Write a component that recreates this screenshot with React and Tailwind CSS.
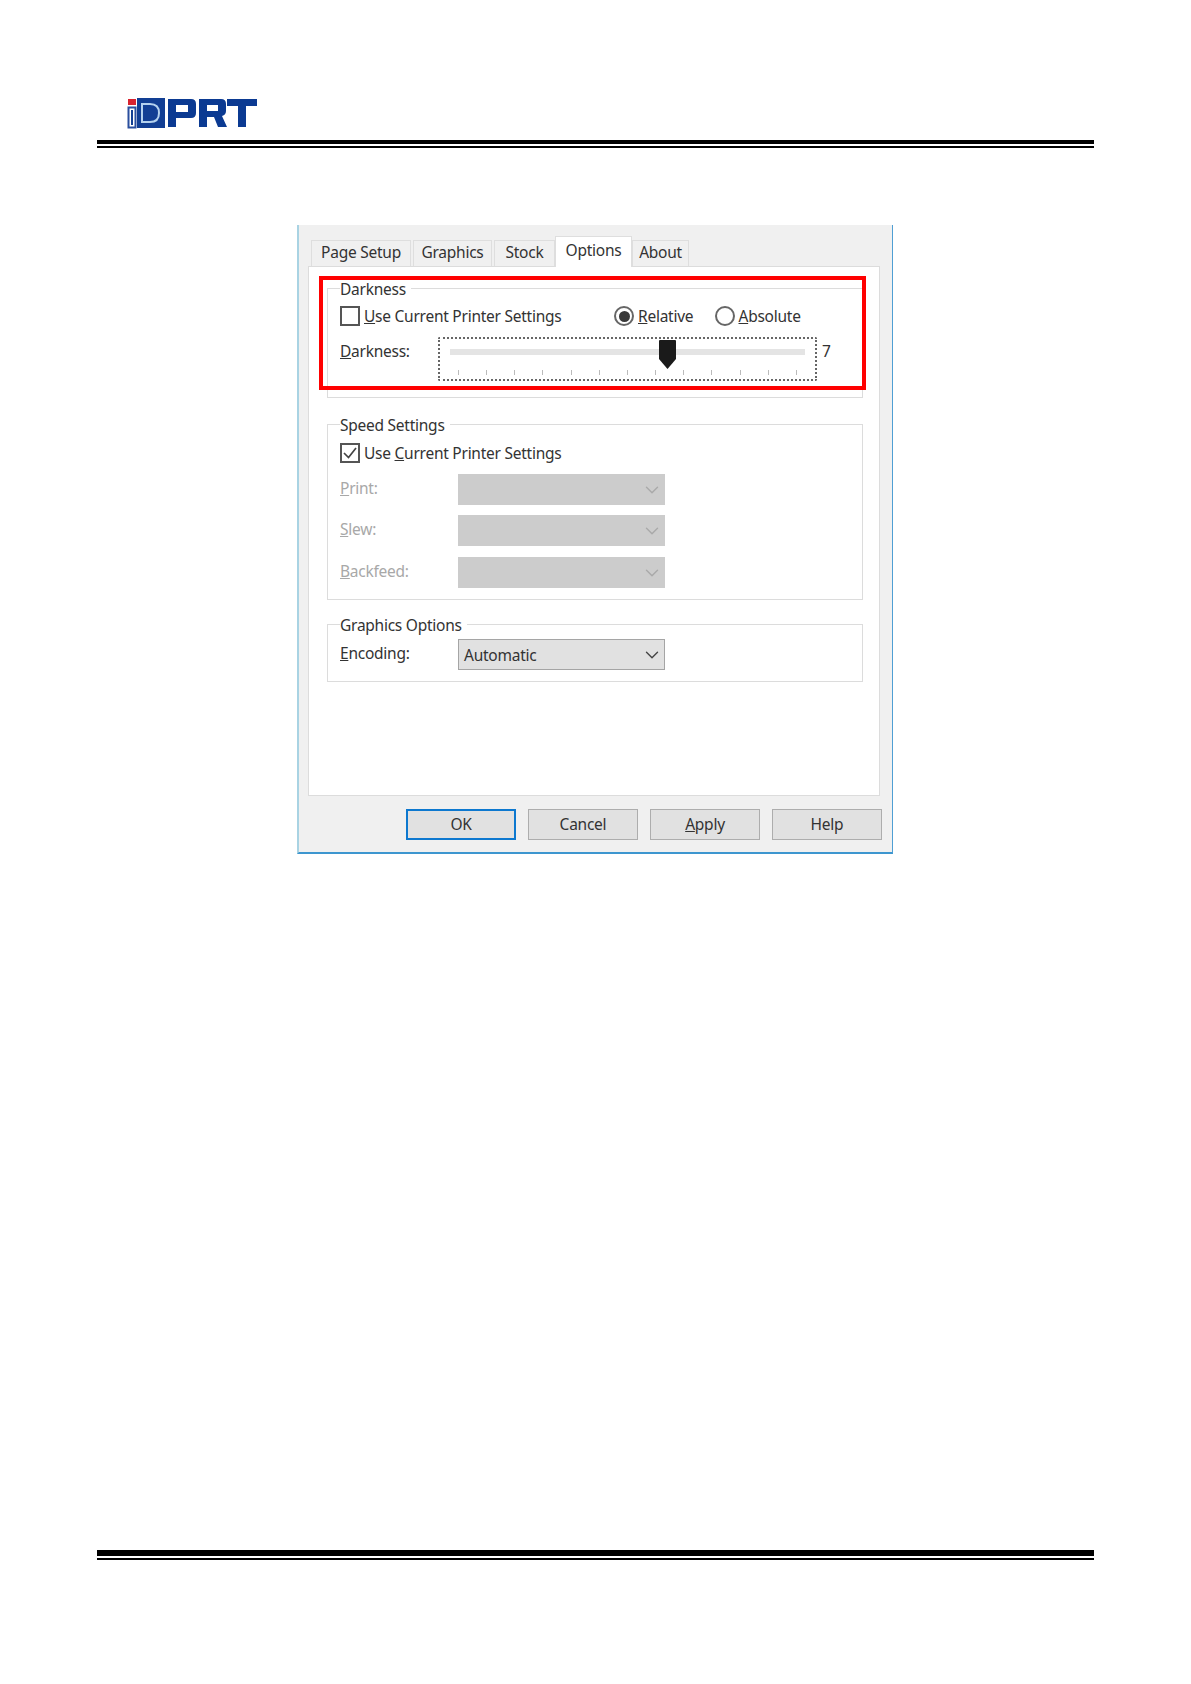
import { ChevronDown } from 'lucide-react'

/* ─── Logo ────────────────────────────────────────────────────────────────── */
function Logo() {
  return (
    <svg width="130" height="31" viewBox="0 0 130 31" className="ml-[30px] block">
      <rect x="1" y="1" width="8" height="6" fill="#d8232f" />
      <rect x="1.5" y="9.5" width="7" height="20" fill="#fff" stroke="#2a4f9e" strokeWidth="2" />
      <rect x="4" y="12" width="2" height="15" fill="#123f94" />
      <rect x="10" y="0" width="28" height="30" fill="#123f94" />
      <path d="M14 5 H23 Q33 5 33 15 Q33 25 23 25 H14 Z M16 7 V23 H23 Q31 23 31 15 Q31 7 23 7 Z" fill="#b5d2ee" fillRule="evenodd" />
      <path fillRule="evenodd" fill="#0b3a92" d="M41 29 V1 H64 Q69 1 69 6 V15 Q69 20 64 20 H49 V29 Z M49 7 V14 H61 V7 Z" />
      <path fillRule="evenodd" fill="#0b3a92" d="M72 29 V1 H94 Q99 1 99 6 V13 Q99 17 95 18 L100 29 H91 L87 19 H80 V29 Z M80 7 V13 H91 V7 Z" />
      <path fill="#0b3a92" d="M100 1 H130 V8 H119 V29 H111 V8 H100 Z" />
    </svg>
  )
}

/* ─── Small dialog pieces ─────────────────────────────────────────────────── */
function Tab({ label, width }) {
  return (
    <div
      className={`h-[26px] flex items-center justify-center pb-[2px] bg-[#f0f0f0] border border-b-0 border-[#dedede] text-[#333] ${width}`}
    >
      {label}
    </div>
  )
}

function Group({ title, className, children }) {
  return (
    <div className={`relative border border-[#dcdcdc] px-3 ${className}`}>
      <span className="absolute left-3 top-[-11px] h-[22px] bg-white pr-[5px] leading-[22px] text-[#333]">{title}</span>
      {children}
    </div>
  )
}

function Checkbox({ checked }) {
  return (
    <div className="w-5 h-5 shrink-0 border-2 border-[#555] bg-white flex items-center justify-center">
      {checked && (
        <svg width="16" height="16" viewBox="0 0 16 16" fill="none">
          <path d="M2 8 L6.5 12.5 L14 3" stroke="#444" strokeWidth="1.7" />
        </svg>
      )}
    </div>
  )
}

function Radio({ checked }) {
  return (
    <div className="w-5 h-5 shrink-0 rounded-full border-2 border-[#666] bg-white flex items-center justify-center">
      {checked && <div className="w-[11px] h-[11px] rounded-full bg-[#3a3a3a]" />}
    </div>
  )
}

function SelectRow({ label, value, disabled }) {
  return (
    <div className="flex items-center">
      <div className={`w-[118px] -mt-[1px] ${disabled ? 'text-[#a8a8a8]' : 'text-[#333]'}`}>{label}</div>
      <div
        className={`w-[207px] h-[31px] flex items-center justify-between pl-[5px] ${
          disabled ? 'bg-[#cccccc] pr-[2px]' : 'bg-[#e1e1e1] border border-[#a5a5a5] pr-[1px]'
        }`}
      >
        <span className="text-[#333] pt-[2px]">{value}</span>
        <ChevronDown size={22} strokeWidth={1.5} color={disabled ? '#a9a9a9' : '#444'} />
      </div>
    </div>
  )
}

function DialogButton({ children, focused }) {
  return (
    <div
      className={`w-[110px] h-[31px] flex items-center justify-center pt-[1px] bg-[#e1e1e1] text-[#333] ${
        focused ? 'border-2 border-[#0d78cf]' : 'border-[1.5px] border-[#adadad]'
      }`}
    >
      {children}
    </div>
  )
}

const ticks = Array.from({ length: 13 })

/* ─── App ─────────────────────────────────────────────────────────────────── */
export default function App() {
  return (
    <div
      className="min-h-[1684px] bg-white pt-[98px] px-[97px] text-[15.5px] tracking-[-0.25px]"
      style={{ fontFamily: '"Noto Sans", sans-serif' }}
    >
      <Logo />
      <div className="mt-[11px] h-[4px] bg-black" />
      <div className="mt-[2px] h-[2px] bg-black" />

      {/* printer driver dialog */}
      <div className="mt-[77px] ml-[200px] w-[596px] h-[629px] bg-[#f0f0f0] border-l-2 border-r border-b-2 border-l-[#a9d3e3] border-r-[#4f9fd4] border-b-[#3d96cf] pt-[11px] pl-[9px]">
        <div className="flex items-end pl-[3px] h-[30px] gap-[2px]">
          <Tab label="Page Setup" width="w-[100px]" />
          <Tab label="Graphics" width="w-[79px]" />
          <Tab label="Stock" width="w-[61px] -mr-[2px]" />
          <div className="relative z-10 w-[77px] h-[31px] -mb-px flex items-center justify-center bg-white border border-b-0 border-[#dedede] text-[#333] pb-[3px]">
            Options
          </div>
          <div className="-ml-[2px]">
            <Tab label="About" width="w-[57px]" />
          </div>
        </div>

        <div className="relative w-[572px] h-[530px] bg-white border border-[#dcdcdc] pt-[21px] pl-[18px]">
          <Group title="Darkness" className="w-[536px] h-[110px] pt-[17px]">
            <div className="flex items-center h-5">
              <div className="w-[274px] flex items-center gap-[4px]">
                <Checkbox />
                <span className="text-[#333] pt-[1px]"><u>U</u>se Current Printer Settings</span>
              </div>
              <div className="w-[100.5px] flex items-center gap-[4px]">
                <Radio checked />
                <span className="text-[#333] pt-[1px]"><u>R</u>elative</span>
              </div>
              <div className="flex items-center gap-[4px]">
                <Radio />
                <span className="text-[#333] pt-[1px]"><u>A</u>bsolute</span>
              </div>
            </div>
            <div className="flex items-start mt-[11px]">
              <div className="w-[98px] text-[#333] pt-[3px]"><u>D</u>arkness:</div>
              <div className="relative w-[379px] h-[44px] border-2 border-dotted border-[#666] rounded-[2px] pt-[10px]">
                <div className="ml-[10px] w-[355px] h-[6px] bg-[#e4e4e4]" />
                <svg width="17" height="29" viewBox="0 0 17 29" className="absolute left-[219px] top-[1px]">
                  <path d="M0 1 Q0 0 1 0 H16 Q17 0 17 1 V19 L8.5 29 L0 19 Z" fill="#1a1a1a" />
                </svg>
                <div className="ml-[18px] mt-[15px] w-[339px] flex justify-between">
                  {ticks.map((_, i) => (
                    <div key={i} className="w-px h-[5px] bg-[#bbbbbb]" />
                  ))}
                </div>
              </div>
              <span className="ml-[5px] text-[#333] pt-[3px]">7</span>
            </div>
          </Group>

          <Group title="Speed Settings" className="mt-[26px] w-[536px] h-[176px] pt-[18px]">
            <div className="flex items-center gap-[4px] h-5">
              <Checkbox checked />
              <span className="text-[#333] pt-[1px]">Use <u>C</u>urrent Printer Settings</span>
            </div>
            <div className="mt-[11px] flex flex-col gap-[10px]">
              <SelectRow label={<><u>P</u>rint:</>} disabled />
              <SelectRow label={<><u>S</u>lew:</>} disabled />
              <div className="mt-[1px]">
                <SelectRow label={<><u>B</u>ackfeed:</>} disabled />
              </div>
            </div>
          </Group>

          <Group title="Graphics Options" className="mt-[24px] w-[536px] h-[58px] pt-[14px]">
            <SelectRow label={<><u>E</u>ncoding:</>} value="Automatic" />
          </Group>

          {/* red highlight around the darkness group */}
          <div className="absolute left-[10px] top-[9px] w-[547px] h-[114px] border-4 border-[#ff0000]" />
        </div>

        <div className="flex justify-end gap-[12px] mt-[13px] w-[574px]">
          <DialogButton focused>OK</DialogButton>
          <DialogButton>Cancel</DialogButton>
          <DialogButton><span><u>A</u>pply</span></DialogButton>
          <DialogButton>Help</DialogButton>
        </div>
      </div>

      <div className="mt-[696px] h-[6px] bg-black" />
      <div className="mt-[2px] h-[2px] bg-black" />
    </div>
  )
}
